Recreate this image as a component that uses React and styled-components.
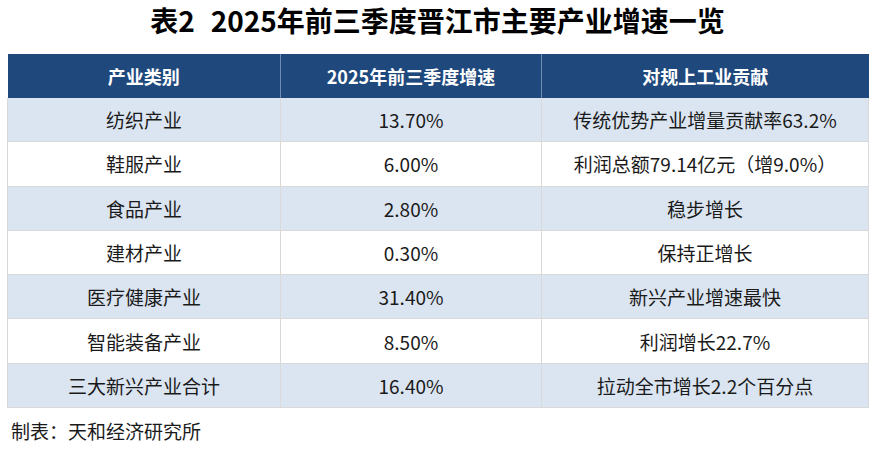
import React from "react";
import styled, { createGlobalStyle } from "styled-components";

const GlobalStyle = createGlobalStyle`
  html, body {
    margin: 0;
    padding: 0;
    background: #ffffff;
  }
  body {
    font-family: "Noto Sans CJK SC", "Noto Sans", sans-serif;
    color: #1a1a1a;
  }
`;

const Page = styled.div`
  display: flex;
  flex-direction: column;
  width: 877px;
  height: 449px;
  padding: 0 9px 0 7px;
  box-sizing: border-box;
`;

const Title = styled.h1`
  margin: 0;
  height: 54px;
  display: flex;
  align-items: center;
  justify-content: center;
  padding-bottom: 14px;
  box-sizing: border-box;
  font-size: 28px;
  font-weight: 700;
  color: #000;
`;

const Gap = styled.span`
  display: inline-block;
  width: 16px;
`;

const Table = styled.table`
  width: 861px;
  border-collapse: collapse;
  table-layout: fixed;
`;

const HeadCell = styled.th`
  height: 44px;
  padding: 0;
  background: #1f497d;
  color: #ffffff;
  font-size: 18px;
  font-weight: 700;
  text-align: center;
  border-left: 1px solid #6f8db3;
  &:first-child {
    border-left: none;
  }
`;

const Row = styled.tr`
  background: ${p => (p.$striped ? "#dbe5f1" : "#ffffff")};
`;

const Cell = styled.td`
  height: 43.3px;
  padding: 0;
  text-align: center;
  font-size: 19px;
  color: #1a1a1a;
  border: 1px solid #d9d9d9;
  border-top: none;
`;

const Source = styled.div`
  padding: 9px 0 0 4px;
  font-size: 19px;
  color: #1a1a1a;
`;

const rows = [
  ["纺织产业", "13.70%", "传统优势产业增量贡献率63.2%"],
  ["鞋服产业", "6.00%", "利润总额79.14亿元（增9.0%）"],
  ["食品产业", "2.80%", "稳步增长"],
  ["建材产业", "0.30%", "保持正增长"],
  ["医疗健康产业", "31.40%", "新兴产业增速最快"],
  ["智能装备产业", "8.50%", "利润增长22.7%"],
  ["三大新兴产业合计", "16.40%", "拉动全市增长2.2个百分点"]
];

const App = () => {
  return (
    <Page>
      <GlobalStyle />
      <Title>
        表2<Gap />2025年前三季度晋江市主要产业增速一览
      </Title>
      <Table>
        <colgroup>
          <col style={{ width: "273px" }} />
          <col style={{ width: "261px" }} />
          <col style={{ width: "327px" }} />
        </colgroup>
        <thead>
          <tr>
            <HeadCell>产业类别</HeadCell>
            <HeadCell>2025年前三季度增速</HeadCell>
            <HeadCell>对规上工业贡献</HeadCell>
          </tr>
        </thead>
        <tbody>
          {rows.map((r, i) => (
            <Row key={r[0]} $striped={i % 2 === 0}>
              <Cell>{r[0]}</Cell>
              <Cell>{r[1]}</Cell>
              <Cell>{r[2]}</Cell>
            </Row>
          ))}
        </tbody>
      </Table>
      <Source>制表：天和经济研究所</Source>
    </Page>
  );
};

export default App;
